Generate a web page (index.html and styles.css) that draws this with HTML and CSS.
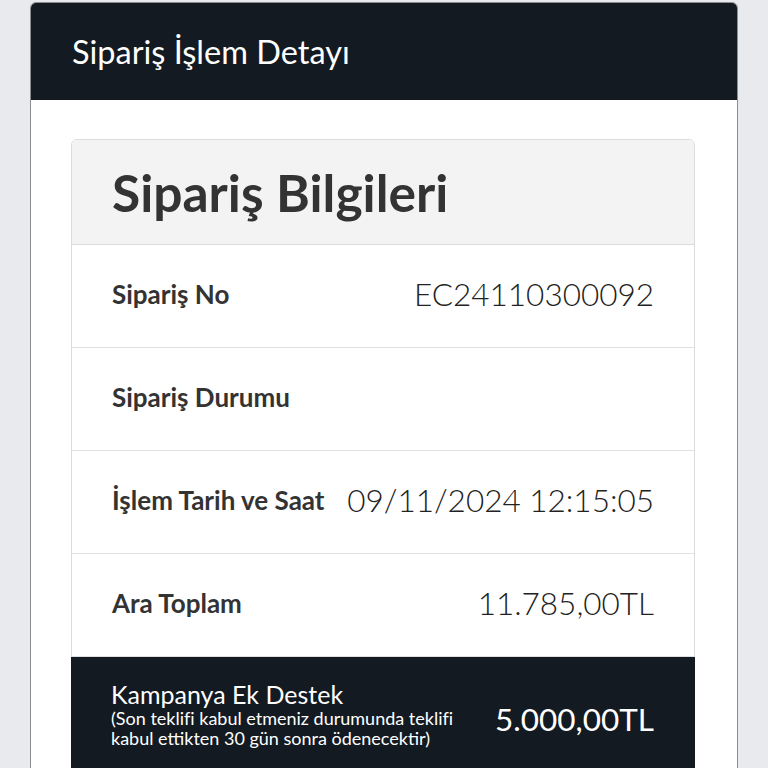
FILE: index.html
```html
<!DOCTYPE html>
<html lang="tr">
<head>
  <meta charset="UTF-8">
  <title>Sipariş İşlem Detayı</title>
  <link rel="stylesheet" href="styles.css">
</head>
<body>
  <div class="panel">
    <div class="panel-head">
      <h1>Sipariş İşlem Detayı</h1>
    </div>
    <div class="panel-body">
      <div class="card">
        <div class="card-head">
          <h2>Sipariş Bilgileri</h2>
        </div>
        <div class="row">
          <span class="label">Sipariş No</span>
          <span class="value">EC24110300092</span>
        </div>
        <div class="row">
          <span class="label">Sipariş Durumu</span>
          <span class="value"></span>
        </div>
        <div class="row">
          <span class="label">İşlem Tarih ve Saat</span>
          <span class="value">09/11/2024 12:15:05</span>
        </div>
        <div class="row">
          <span class="label">Ara Toplam</span>
          <span class="value">11.785,00TL</span>
        </div>
        <div class="row dark">
          <div class="note">
            <div class="note-title">Kampanya Ek Destek</div>
            <div class="note-small">(Son teklifi kabul etmeniz durumunda teklifi<br>kabul ettikten 30 gün sonra ödenecektir)</div>
          </div>
          <span class="value">5.000,00TL</span>
        </div>
      </div>
    </div>
  </div>
</body>
</html>
```

FILE: styles.css
```css
body {
  margin: 0;
  padding: 2px 30px 0;
  background: #e9eaed;
  font-family: Lato, "Open Sans", sans-serif;
  color: #222;
  overflow: hidden;
}

.panel {
  width: 708px;
  box-sizing: border-box;
  border: 1px solid #8c8c8c;
  border-radius: 6px 6px 0 0;
  background: #fff;
  height: 800px;
}

.panel-head {
  background: #131a22;
  height: 97px;
  border-radius: 5px 5px 0 0;
  display: flex;
  align-items: center;
  padding-left: 41px;
}

.panel-head h1 {
  margin: 0;
  font-size: 32.5px;
  font-weight: 400;
  color: #fff;
}

.panel-body {
  padding: 39px 40px 0 40px;
}

.card {
  border: 1px solid #dcdcdc;
  border-radius: 6px;
  width: 624px;
  box-sizing: border-box;
}

.card-head {
  background: #f3f3f3;
  height: 104px;
  border-bottom: 1px solid #dcdcdc;
  border-radius: 6px 6px 0 0;
  display: flex;
  align-items: center;
  padding-left: 40px;
}

.card-head h2 {
  margin: 0;
  font-size: 51.5px;
  font-weight: 700;
  color: #333;
}

.row {
  height: 103px;
  border-bottom: 1px solid #e0e0e0;
  display: flex;
  justify-content: space-between;
  align-items: center;
  padding: 0 40px 4px 40px;
  box-sizing: border-box;
}

.label {
  font-size: 26px;
  font-weight: 700;
  color: #333;
}

.value {
  font-size: 31.5px;
  font-weight: 300;
  color: #222;
}

.row.dark {
  background: #131a22;
  color: #fff;
  height: 130px;
  align-items: flex-start;
  padding-top: 23px;
  margin: 0 -1px;
  padding-right: 41px;
}

.note-title {
  font-size: 25px;
  line-height: 28px;
}

.note-small {
  font-size: 18px;
  line-height: 20px;
}

.row.dark .value {
  color: #fff;
  font-weight: 400;
  margin-top: 20px;
}
```
